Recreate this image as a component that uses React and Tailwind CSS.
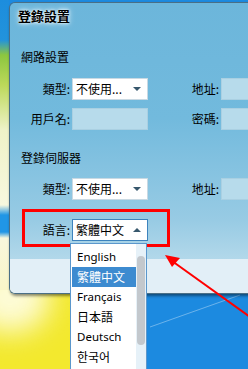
import { useState } from 'react';

const cjk = { fontFamily: '"Noto Sans CJK TC", "Noto Sans", sans-serif' };

function Select({ value, open }) {
    return (
        <div className={`w-[76px] h-[22px] bg-white flex items-center justify-between pl-[3px] pr-[6px] border ${open ? 'border-[#3d83bd]' : 'border-[#c9d9e3]'}`}>
            <span className="text-[12px] leading-none text-black whitespace-nowrap">{value}</span>
            {open ? (
                <span className="w-0 h-0 border-l-[4px] border-r-[4px] border-b-[4px] border-l-transparent border-r-transparent border-b-[#37576c]" />
            ) : (
                <span className="w-0 h-0 border-l-[4px] border-r-[4px] border-t-[4px] border-l-transparent border-r-transparent border-t-[#37576c]" />
            )}
        </div>
    );
}

function Field() {
    return <div className="w-[76px] h-[22px] bg-[#b7dbeb] border border-[#aad0e2]" />;
}

function Row({ label, right, rightLabel, children, className = '' }) {
    return (
        <div className={`flex items-center h-[22px] ${className}`}>
            <span className="w-[60px] shrink-0 text-right text-[12px] leading-none text-black">{label}</span>
            <div className="ml-[2px] shrink-0">{children}</div>
            {rightLabel && (
                <>
                    <span className="w-[71px] shrink-0 text-right text-[12px] leading-none text-black">{rightLabel}</span>
                    <div className="ml-[2px] shrink-0">{right}</div>
                </>
            )}
        </div>
    );
}

export default function App() {
    const [lang] = useState('繁體中文');
    const languages = ['English', '繁體中文', 'Français', '日本語', 'Deutsch', '한국어'];

    return (
        <div className="relative w-[248px] h-[369px] overflow-hidden bg-[#1c8ae0]" style={cjk}>
            {/* desktop wallpaper: yellow area bottom-left */}
            <div className="absolute left-0 top-[236px] w-[146px] h-[140px] bg-[#f3e92e]" />
            <div className="absolute left-[-30px] top-[262px] w-[80px] h-[70px] rounded-full bg-[#fdfbd6] blur-[14px]" />

            {/* desktop strip on the left */}
            <div className="absolute left-0 top-0 w-[9px] h-[290px] bg-[linear-gradient(to_bottom,#1d8ddd_0px,#2293dc_40px,#8cc63f_55px,#bcd95a_85px,#eef2c8_130px,#f8f8de_205px,#2196e6_215px,#2196e6_232px,#f8f7dc_238px,#f9f6c8_290px)]" />

            {/* light streak */}
            <svg className="absolute left-0 top-0" width="248" height="369">
                <line x1="150" y1="327" x2="240" y2="295" stroke="#ffffff" strokeOpacity="0.35" strokeWidth="1" />
            </svg>

            {/* dialog window */}
            <div className="absolute left-[9px] top-[2px] w-[260px] h-[292px] rounded-l-[6px] overflow-hidden border border-[#4a6f86] border-r-0 shadow-[1px_2px_3px_rgba(0,0,0,0.45)]">
                <div className="h-[256px] bg-[linear-gradient(to_bottom,#6cb6db_0%,#72badd_45%,#98cbe4_85%,#b2d8ea_100%)] pt-[4px]">
                    <div className="pl-[8px] text-[13px] leading-[18px] font-bold text-black [text-shadow:0_0_6px_#fff,0_0_3px_#fff]">登錄設置</div>

                    <div className="mt-[24px] pl-[11px] text-[12px] leading-[16px] text-black">網路設置</div>
                    <Row label="類型:" rightLabel="地址:" right={<Field />} className="mt-[13px]">
                        <Select value="不使用..." />
                    </Row>
                    <Row label="用戶名:" rightLabel="密碼:" right={<Field />} className="mt-[8px]">
                        <Field />
                    </Row>

                    <div className="mt-[20px] pl-[11px] text-[12px] leading-[16px] text-black">登錄伺服器</div>
                    <Row label="類型:" rightLabel="地址:" right={<Field />} className="mt-[12px]">
                        <Select value="不使用..." />
                    </Row>

                    <Row label="語言:" className="mt-[19px]">
                        <Select value={lang} open />
                    </Row>
                </div>
                <div className="h-[36px] bg-[#e2eff7]" />
            </div>

            {/* red highlight box */}
            <div className="absolute left-[22px] top-[209px] w-[148px] h-[38px] border-[3px] border-[#ff0000]" />

            {/* dropdown list */}
            <div className="absolute left-[70px] top-[243px] w-[77px] h-[140px] bg-white border border-[#5b97cc] flex">
                <div className="flex-1 pt-[3px] pl-[1px]">
                    {languages.map((l) => (
                        <div
                            key={l}
                            className={`h-[20px] flex items-center pl-[5px] text-[12px] leading-none ${l === lang ? 'bg-[#3d8bd0] text-white' : 'text-black'}`}
                            style={l === '한국어' ? { fontFamily: '"Noto Sans CJK KR", sans-serif' } : l === '日本語' ? { fontFamily: '"Noto Sans CJK JP", sans-serif' } : /^[A-Z]/.test(l) ? { fontFamily: '"Noto Sans", "Liberation Sans", sans-serif', fontSize: '11.5px' } : undefined}
                        >
                            {l}
                        </div>
                    ))}
                </div>
                <div className="w-[10px] bg-[#e6f1f8] pt-[12px] flex justify-center">
                    <div className="w-[8px] h-[89px] rounded-[4px] bg-[#c3c8cd]" />
                </div>
            </div>

            {/* red arrow */}
            <svg className="absolute left-0 top-0" width="248" height="369">
                <line x1="250" y1="317" x2="172" y2="261" stroke="#ff0000" strokeWidth="2" />
                <polygon points="165,255 180,258 172,267" fill="#ff0000" />
            </svg>
        </div>
    );
}
